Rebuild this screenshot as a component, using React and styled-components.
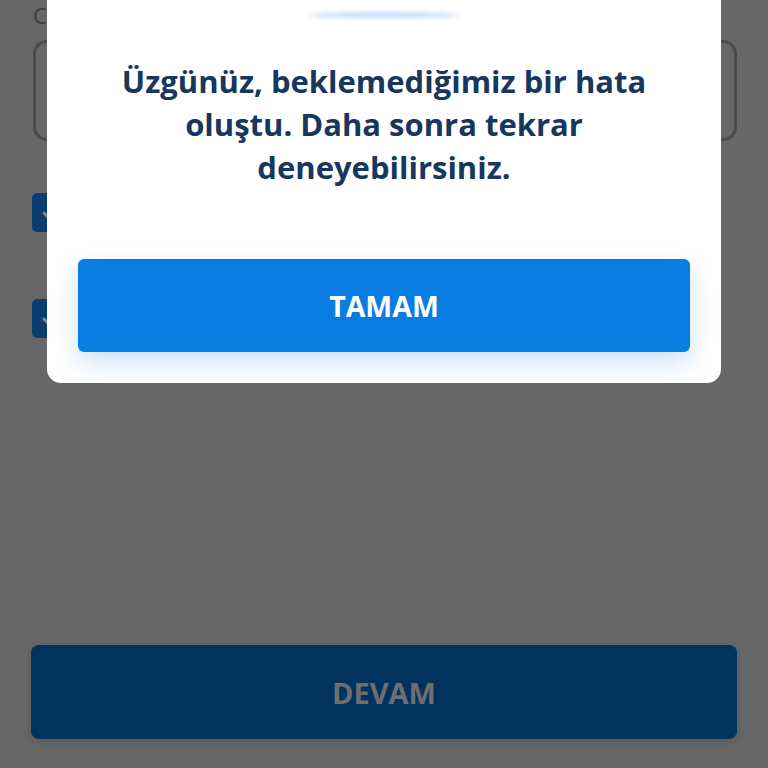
import React from "react";
import styled, { createGlobalStyle } from "styled-components";

const GlobalStyle = createGlobalStyle`
  html, body {
    margin: 0;
    padding: 0;
    background: #676767;
  }
  * {
    box-sizing: border-box;
  }
`;

const Page = styled.div`
  position: relative;
  width: 768px;
  height: 768px;
  overflow: hidden;
  background: #676767;
  font-family: "Open Sans", "Noto Sans", sans-serif;
  display: flex;
  flex-direction: column;
  padding: 0 31px 29px 31px;
`;

const FieldLabel = styled.div`
  font-size: 22px;
  line-height: 30px;
  color: #3c3c3c;
  margin-top: 0;
  padding-left: 2px;
`;

const InputBox = styled.div`
  margin: 10px 0 0 2px;
  height: 101px;
  border: 3px solid #4b4b4b;
  border-radius: 14px;
`;

const CheckRow = styled.div`
  display: flex;
  align-items: center;
  gap: 16px;
  margin-top: ${(p) => p.$gap}px;
  padding-left: 1px;
`;

const CheckBox = styled.div`
  width: 38px;
  height: 39px;
  border-radius: 5px;
  background: #0a3d70;
  display: flex;
  align-items: center;
  justify-content: center;
`;

const Spacer = styled.div`
  flex: 1;
`;

const ContinueButton = styled.button`
  height: 94px;
  border: none;
  border-radius: 8px;
  background: #02335f;
  color: #6e6e6e;
  font-family: "Open Sans", "Noto Sans", sans-serif;
  font-weight: 700;
  font-size: 29px;
  box-shadow: 0 2px 6px rgba(0, 0, 0, 0.15);
`;

const Modal = styled.div`
  position: absolute;
  left: 47px;
  top: -60px;
  width: 674px;
  background: #ffffff;
  border-radius: 14px;
  padding: 0 31px 31px 31px;
  display: flex;
  flex-direction: column;
  align-items: center;
`;

const Glow = styled.div`
  width: 150px;
  height: 6px;
  margin-top: 72px;
  border-radius: 50%;
  background: #c6dcf2;
  filter: blur(2px);
`;

const Title = styled.h2`
  margin: 42px 0 0 0;
  font-size: 31px;
  line-height: 43px;
  font-weight: 700;
  color: #17375e;
  text-align: center;
  max-width: 600px;
`;

const OkButton = styled.button`
  margin-top: 70px;
  width: 100%;
  height: 93px;
  border: none;
  border-radius: 6px;
  background: #0a7de2;
  color: #ffffff;
  font-family: "Open Sans", "Noto Sans", sans-serif;
  font-weight: 700;
  font-size: 28.5px;
  box-shadow: 0 10px 26px rgba(10, 125, 226, 0.22);
`;

const Check = () => (
  <svg width="22" height="22" viewBox="0 0 22 22">
    <path
      d="M4 11 L9 16 L18 6"
      fill="none"
      stroke="#7a8a99"
      strokeWidth="3"
      strokeLinecap="round"
      strokeLinejoin="round"
    />
  </svg>
);

export default function App() {
  return (
    <>
      <GlobalStyle />
      <Page>
        <FieldLabel>Cep telefonu</FieldLabel>
        <InputBox />
        <CheckRow $gap={52}>
          <CheckBox>
            <Check />
          </CheckBox>
        </CheckRow>
        <CheckRow $gap={67}>
          <CheckBox>
            <Check />
          </CheckBox>
        </CheckRow>
        <Spacer />
        <ContinueButton>DEVAM</ContinueButton>

        <Modal>
          <Glow />
          <Title>
            Üzgünüz, beklemediğimiz bir hata
            <br />
            oluştu. Daha sonra tekrar
            <br />
            deneyebilirsiniz.
          </Title>
          <OkButton>TAMAM</OkButton>
        </Modal>
      </Page>
    </>
  );
}
